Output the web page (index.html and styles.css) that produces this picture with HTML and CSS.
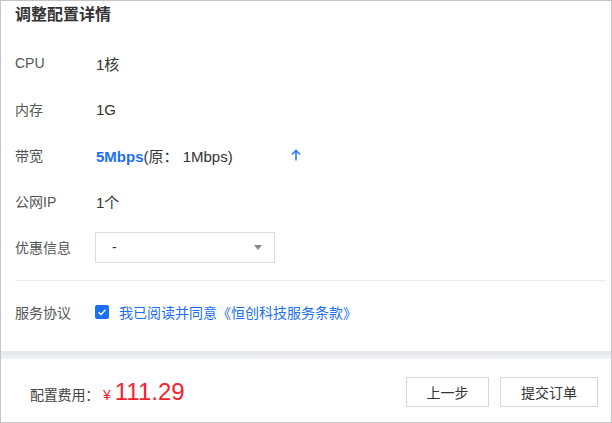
FILE: index.html
```html
<!DOCTYPE html>
<html lang="zh">
<head>
<meta charset="utf-8">
<link rel="stylesheet" href="styles.css">
</head>
<body>
<div class="frame">
  <div class="main">
    <div class="title">调整配置详情</div>
    <div class="row"><span class="label">CPU</span><span class="value">1核</span></div>
    <div class="row"><span class="label">内存</span><span class="value">1G</span></div>
    <div class="row">
      <span class="label">带宽</span>
      <span class="value bw"><b class="hl">5Mbps</b>(原： 1Mbps)</span>
      <svg class="arrow" width="10" height="12" viewBox="0 0 10 12"><path d="M5 11.5V1.5M1 5.5L5 1.5L9 5.5" fill="none" stroke="#2b7cf6" stroke-width="1.6"/></svg>
    </div>
    <div class="row"><span class="label">公网IP</span><span class="value">1个</span></div>
    <div class="row">
      <span class="label">优惠信息</span>
      <div class="select"><span>-</span><i class="caret"></i></div>
    </div>
    <div class="divider"></div>
    <div class="row agree">
      <span class="label">服务协议</span>
      <span class="check"><svg width="14" height="14" viewBox="0 0 14 14"><rect width="14" height="14" rx="2" fill="#1c6ff5"/><path d="M3.5 7.2L6 9.5L10.5 4.8" fill="none" stroke="#fff" stroke-width="1.3"/></svg></span>
      <span class="link">我已阅读并同意《恒创科技服务条款》</span>
    </div>
  </div>
  <div class="band"></div>
  <div class="footer">
    <div class="fee"><span class="fee-label">配置费用：</span><span class="yen">¥</span><span class="price">111.29</span></div>
    <div class="btns">
      <button class="btn prev">上一步</button>
      <button class="btn submit">提交订单</button>
    </div>
  </div>
</div>
</body>
</html>
```
FILE: styles.css
```css
* { box-sizing: border-box; }
body {
  margin: 0;
  font-family: "Liberation Sans", "Noto Sans CJK SC", Arial, sans-serif;
  color: #333;
  background: #fff;
}
.frame {
  width: 612px;
  height: 423px;
  border: 1px solid #c4c4c4;
  display: flex;
  flex-direction: column;
}
.main {
  padding: 0 5px 0 14px;
}
.title {
  height: 30px;
  line-height: 28px;
  font-size: 16px;
  font-weight: bold;
  color: #333;
  margin-bottom: 9px;
}
.row {
  height: 46px;
  display: flex;
  align-items: center;
  font-size: 14px;
}
.label {
  width: 81px;
  color: #555;
  font-size: 14px;
}
.value {
  color: #333;
  font-size: 15px;
}
.bw { width: 195px; }
.hl { color: #1c6ff5; font-weight: bold; }
.arrow { display: block; }
.select {
  width: 180px;
  height: 31px;
  margin-left: -1px;
  border: 1px solid #dcdcdc;
  display: flex;
  align-items: center;
  justify-content: space-between;
  padding: 0 12px 0 16px;
  color: #333;
}
.caret {
  width: 0;
  height: 0;
  border-left: 4.5px solid transparent;
  border-right: 4.5px solid transparent;
  border-top: 5px solid #8a8a8a;
}
.divider {
  height: 1px;
  background: #ececec;
  margin-top: 10px;
}
.agree {
  height: 62px;
}
.check { width: 24px; display: flex; margin-left: -1px; }
.check svg { display: block; }
.link { color: #1c6ff5; font-size: 14px; }
.band {
  height: 8px;
  margin-top: 8px;
  background: linear-gradient(#e5e6eb, #f2f2f5);
}
.footer {
  flex: 1;
  display: flex;
  align-items: center;
  justify-content: space-between;
  padding: 2px 13px 0 29px;
}
.fee { display: flex; align-items: baseline; }
.fee-label { font-size: 14px; color: #444; margin-right: 4px; letter-spacing: -0.2px; }
.yen { font-size: 14px; color: #f5222d; margin-right: 4px; }
.price { font-size: 24px; color: #f5222d; }
.btns { display: flex; gap: 11px; }
.btn {
  height: 30px;
  background: #fff;
  border: 1px solid #d6d6d6;
  font-family: "Liberation Sans", "Noto Sans CJK SC", sans-serif;
  font-size: 14px;
  color: #333;
  padding: 0;
}
.prev { width: 83px; }
.submit { width: 98px; }
```
